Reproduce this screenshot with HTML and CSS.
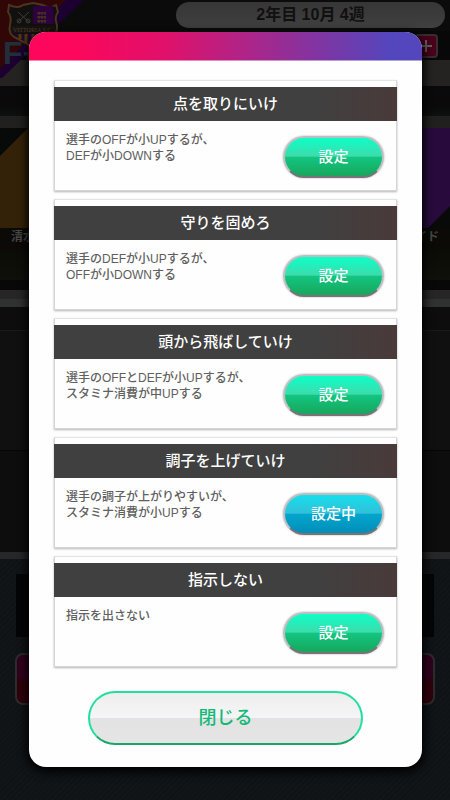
FILE: index.html
```
<!DOCTYPE html>
<html lang="ja">
<head>
    <meta charset="UTF-8">
    <meta name="viewport" content="width=device-width, initial-scale=1">
    <title>作戦指示</title>
    <link rel="stylesheet" href="styles.css">
</head>
<body>
    <div class="scene">
        <div class="top-bar">
            <svg class="emblem" viewBox="0 0 84 86" aria-hidden="true">
                <path d="M0 0H84L2 78H0Z" fill="#1b0030"/>
                <path d="M0 0H66L0 69Z" fill="#300607"/>
                <path d="M9 5Q18 9 23 5L33 3L43 5Q49 9 56 5L58 12Q54 17 57 25Q58 33 52 37L33 47L14 37Q8 33 10 25Q12 17 8 12Z" fill="#11100f" stroke="#4b3520" stroke-width="2"/>
                <path d="M33 6H53L54 24H33Z" fill="#2e003e"/>
                <path d="M12 34H54L33 46Z" fill="#28052f"/>
                <path d="M20 34V39M26 34V43M33 34V46M40 34V43M46 34V39" stroke="#4a3d0c" stroke-width="3"/>
                <path d="M18 12L29 22M29 12L18 22" stroke="#403d37" stroke-width="1"/>
                <circle cx="19" cy="21" r="2" fill="none" stroke="#403d37"/>
                <circle cx="28" cy="21" r="2" fill="none" stroke="#403d37"/>
                <path d="M37 13h9M37 17h9M37 21h9M39 12v3M42 12v3M45 12v3M39 16v3M42 16v3M45 16v3M39 20v3M42 20v3M45 20v3" stroke="#4b4411"/>
                <path d="M11 26H55V33H11Z" fill="#171310"/>
                <text class="emblem-name" x="13" y="32">VITTORIA S.C.</text>
                <text class="emblem-rank" x="3" y="64">F+</text>
            </svg>
            <div class="date">2年目 10月 4週</div>
        </div>
        <div class="money">
            <svg viewBox="0 0 24 24" aria-hidden="true">
                <rect x="1" y="1" width="22" height="22" rx="3" fill="#4a001b" stroke="#3a2d31" stroke-width="2"/>
                <path d="M12 6V18M6 12H18" stroke="#646064" stroke-width="2"/>
            </svg>
        </div>
        <div class="wall"></div>
        <div class="shelf"></div>
        <div class="players">
            <div class="player player-left"></div>
            <div class="player player-right"></div>
        </div>
        <div class="names"><span>清水</span><span>イド</span></div>
        <div class="stand"></div>
        <div class="rail"></div>
        <div class="board"></div>
        <div class="board board-low"></div>
        <div class="rail rail-low"></div>
        <div class="ground">
            <div class="message"></div>
            <div class="action"></div>
        </div>
    </div>

    <div class="overlay">
        <div class="modal" role="dialog" aria-label="作戦指示">
            <div class="modal-header"></div>
            <div class="modal-body">
                <div class="card">
                    <h2>点を取りにいけ</h2>
                    <div class="card-body">
                        <p>選手のOFFが小UPするが、<br>DEFが小DOWNする</p>
                        <button class="set">設定</button>
                    </div>
                </div>
                <div class="card">
                    <h2>守りを固めろ</h2>
                    <div class="card-body">
                        <p>選手のDEFが小UPするが、<br>OFFが小DOWNする</p>
                        <button class="set">設定</button>
                    </div>
                </div>
                <div class="card">
                    <h2>頭から飛ばしていけ</h2>
                    <div class="card-body">
                        <p>選手のOFFとDEFが小UPするが、<br>スタミナ消費が中UPする</p>
                        <button class="set">設定</button>
                    </div>
                </div>
                <div class="card">
                    <h2>調子を上げていけ</h2>
                    <div class="card-body">
                        <p>選手の調子が上がりやすいが、<br>スタミナ消費が小UPする</p>
                        <button class="set active">設定中</button>
                    </div>
                </div>
                <div class="card">
                    <h2>指示しない</h2>
                    <div class="card-body">
                        <p>指示を出さない</p>
                        <button class="set">設定</button>
                    </div>
                </div>
            </div>
            <button class="close">閉じる</button>
        </div>
    </div>
</body>
</html>
```

FILE: styles.css
```
* {
    box-sizing: border-box;
}

body {
    position: relative;
    margin: 0;
    min-height: 100vh;
    background-color: #11161a;
    font-family: "Liberation Sans", "Noto Sans CJK JP", sans-serif;
}

/* darkened game screen */
.scene {
    display: flex;
    flex-direction: column;
    min-height: 100vh;
    overflow: hidden;
}

.top-bar {
    display: flex;
    height: 31px;
    padding: 2px 5px 3px 0;
    background-color: #0b0b0b;
}

.emblem {
    flex: none;
    width: 84px;
    height: 86px;
    margin: -2px 92px 0 0;
    z-index: 1;
}

.emblem-name {
    fill: #55412a;
    font: 6px "Liberation Serif", serif;
}

.emblem-rank {
    fill: #212f3d;
    font: bold 32px "Liberation Sans", sans-serif;
}

.date {
    flex: 1;
    border-radius: 13px;
    background: linear-gradient(#363636, #404040);
    color: #101010;
    font-size: 16px;
    font-weight: 700;
    line-height: 26px;
    text-align: center;
}

.money {
    display: flex;
    justify-content: flex-end;
    height: 29px;
    padding: 3px 12px 0 0;
    background-color: #080808;
}

.money svg {
    width: 24px;
    height: 24px;
}

.wall {
    height: 56px;
    background: linear-gradient(#242321 0 26px, #090a09 26px 45px, #0d1010);
}

.shelf {
    height: 12px;
    background-color: #20201f;
}

.players {
    display: flex;
    justify-content: space-between;
    height: 100px;
    background-color: #080909;
}

.player {
    width: 50%;
}

.player-left {
    background: #342208;
    clip-path: polygon(0 28px, 28px 0, 100% 0, 100% 100%, 0 100%);
}

.player-right {
    background: #280b3c;
    clip-path: polygon(0 0, 100% 0, 100% 78px, 203px 100%, 0 100%);
}

.names {
    display: flex;
    justify-content: space-between;
    height: 22px;
    padding: 0 11px;
    background-color: #0b0a07;
    color: #474747;
    font-size: 12px;
    font-weight: 700;
    line-height: 19px;
}

.stand {
    height: 40px;
    background: linear-gradient(#0c0c07, #10100b 30px, #080808 30px);
}

.rail {
    height: 17px;
    background: linear-gradient(#252625 9px, #303131 9px);
}

.board {
    height: 143px;
    background: linear-gradient(#0d0d0d 23px, #191919 23px, #191919 24px, #101010 24px);
}

.board-low {
    height: 102px;
    border-top: 1px solid #050505;
    background: #0d0d0d;
}

.rail-low {
    height: 7px;
    background: #252729;
}

.ground {
    flex: 1;
    padding: 15px 15px 0;
    background: repeating-linear-gradient(135deg, #0f1316 0 2px, #111518 2px 4px);
}

.message {
    height: 63px;
    margin: 0 1px 16px;
    background-color: #040506;
}

.action {
    height: 52px;
    border: 2px solid #2c2b2e;
    border-radius: 8px;
    background: linear-gradient(#30001d 50%, #30000b 50%);
}

/* dialog */
.overlay {
    position: absolute;
    inset: 0;
    z-index: 2;
    padding: 32px 28px 33px 29px;
}

.modal {
    overflow: hidden;
    border-radius: 17px;
    background-color: #fefefe;
    box-shadow: 0 3px 10px 2px #000;
}

.modal-header {
    height: 29px;
    border-bottom: 1px solid rgba(255, 255, 255, 0.5);
    background: linear-gradient(90deg, #fc075b 12%, #df116b 35%, #5446bd 92%);
}

.modal-body {
    display: flex;
    flex-direction: column;
    gap: 8px;
    padding: 19px 25px 0;
}

.card {
    height: 111px;
    padding-top: 6px;
    border: 1px solid #d5d5d5;
    border-top-color: #e4e4e4;
    box-shadow: 0 1px 2px #b5b5b5;
}

.card h2 {
    height: 34px;
    margin: 0 -1px;
    background: linear-gradient(90deg, #404040 75%, #4a3a3a);
    color: #fff;
    font-size: 15px;
    font-weight: 500;
    line-height: 34px;
    text-align: center;
}

.card-body {
    display: flex;
    justify-content: space-between;
    padding: 11px 12px 0 11px;
}

.card p {
    margin: 0;
    color: #606060;
    font-size: 12px;
    font-weight: 500;
    line-height: 16px;
}

.set {
    width: 101px;
    height: 42px;
    margin-top: 4px;
    padding: 0;
    border: 2px solid #bcbec0;
    border-bottom-color: #777379;
    border-radius: 21px;
    background: linear-gradient(#0dffc8, #3ddcab 48%, #12c681 50%, #17a75c);
    box-shadow: 0 0 2px #aaa;
    color: #fff;
    font-family: inherit;
    font-size: 15px;
    font-weight: 500;
    line-height: 38px;
    cursor: pointer;
}

.set.active {
    background: linear-gradient(#17dfed, #31c0d9 48%, #02a6cd 50%, #028eb9);
}

.close {
    display: block;
    width: 70%;
    height: 54px;
    margin: 24px auto 22px;
    padding: 0;
    border: 2px solid #20dfa0;
    border-bottom-color: #16a76c;
    border-radius: 27px;
    background: linear-gradient(#eee, #f5f5f7 49%, #e3e3e3 50%, #e5e5e5);
    color: #14b978;
    font-family: inherit;
    font-size: 18px;
    font-weight: 500;
    line-height: 48px;
    cursor: pointer;
}
```
